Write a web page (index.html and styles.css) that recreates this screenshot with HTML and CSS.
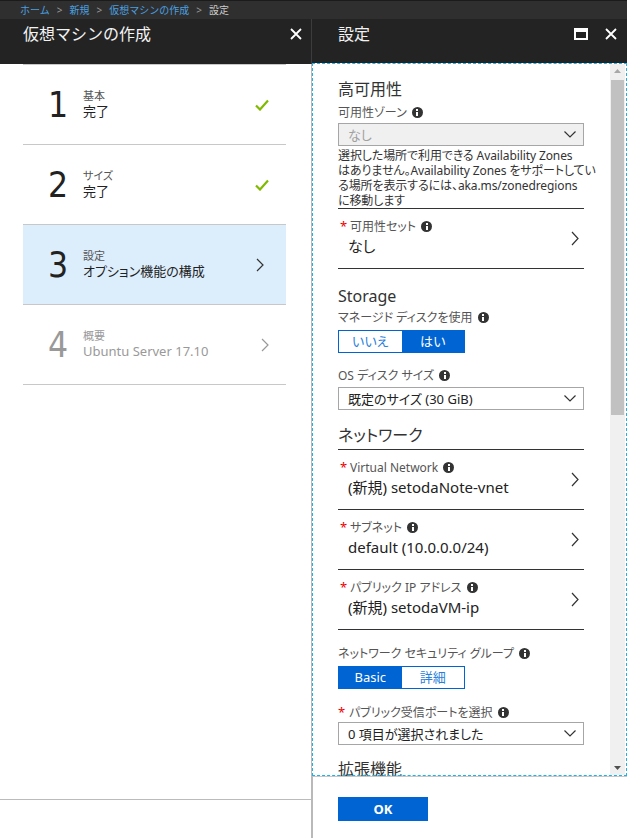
FILE: index.html
```html
<!DOCTYPE html>
<html lang="ja">
<head>
    <meta charset="UTF-8">
    <title>設定</title>
    <link rel="stylesheet" href="styles.css">
</head>
<body>
    <nav class="crumbs"><a>ホーム</a><span class="sep">&gt;</span><a>新規</a><span class="sep">&gt;</span><a>仮想マシンの作成</a><span class="sep">&gt;</span><span class="here">設定</span></nav>
    <div class="blades">
        <section class="blade left">
            <header class="blade-head">
                <h1>仮想マシンの作成</h1>
                <svg class="hicon" width="12" height="12" viewBox="0 0 12 12"><path d="M1 1L11 11M11 1L1 11" stroke="#fff" stroke-width="1.8"/></svg>
            </header>
            <div class="steps-wrap">
                <div class="steps">
                    <div class="step">
                        <span class="num">1</span>
                        <div class="step-text"><div class="step-title">基本</div><div class="step-sub">完了</div></div>
                        <svg class="check" width="14" height="12" viewBox="0 0 14 12"><path d="M1 6.5L5 10.5L13 1.5" fill="none" stroke="#7fba00" stroke-width="2.2"/></svg>
                    </div>
                    <div class="step">
                        <span class="num">2</span>
                        <div class="step-text"><div class="step-title">サイズ</div><div class="step-sub">完了</div></div>
                        <svg class="check" width="14" height="12" viewBox="0 0 14 12"><path d="M1 6.5L5 10.5L13 1.5" fill="none" stroke="#7fba00" stroke-width="2.2"/></svg>
                    </div>
                    <div class="step active">
                        <span class="num">3</span>
                        <div class="step-text"><div class="step-title">設定</div><div class="step-sub">オプション機能の構成</div></div>
                        <svg class="chev" width="8" height="14" viewBox="0 0 8 14"><path d="M1 1L7 7L1 13" fill="none" stroke="#333" stroke-width="1.2"/></svg>
                    </div>
                    <div class="step disabled">
                        <span class="num">4</span>
                        <div class="step-text"><div class="step-title">概要</div><div class="step-sub">Ubuntu Server 17.10</div></div>
                        <svg class="chev" width="8" height="14" viewBox="0 0 8 14"><path d="M1 1L7 7L1 13" fill="none" stroke="#999" stroke-width="1.2"/></svg>
                    </div>
                </div>
            </div>
            <div class="left-foot"></div>
        </section>

        <section class="blade right">
            <header class="blade-head">
                <h1>設定</h1>
                <div class="head-icons">
                    <svg width="14" height="12" viewBox="0 0 14 12"><rect x="1" y="1" width="12" height="10" fill="none" stroke="#fff" stroke-width="2"/><rect x="1" y="1" width="12" height="3" fill="#fff"/></svg>
                    <svg width="12" height="12" viewBox="0 0 12 12"><path d="M1 1L11 11M11 1L1 11" stroke="#fff" stroke-width="1.8"/></svg>
                </div>
            </header>
            <div class="scroll">
                <div class="form">
                    <h2 class="sec first">高可用性</h2>
                    <div class="label top">可用性ゾーン <i class="info"></i></div>
                    <div class="select disabled"><span>なし</span><svg width="12" height="7" viewBox="0 0 12 7"><path d="M0.5 0.5L6 6L11.5 0.5" fill="none" stroke="#333" stroke-width="1.2"/></svg></div>
                    <p class="help">選択した場所で利用できる Availability Zones<br>はありません。Availability Zones をサポートしてい<br>る場所を表示するには、aka.ms/zonedregions<br>に移動します</p>
                    <div class="rows">
                        <div class="row">
                            <div class="row-text">
                                <div class="label"><span class="req">*</span>可用性セット <i class="info"></i></div>
                                <div class="value">なし</div>
                            </div>
                            <svg width="8" height="15" viewBox="0 0 8 15"><path d="M1 1L7 7.5L1 14" fill="none" stroke="#333" stroke-width="1.2"/></svg>
                        </div>
                    </div>

                    <h2 class="sec storage">Storage</h2>
                    <div class="label">マネージド ディスクを使用 <i class="info"></i></div>
                    <div class="toggle"><span>いいえ</span><span class="on">はい</span></div>
                    <div class="label gap">OS ディスク サイズ <i class="info"></i></div>
                    <div class="select"><span>既定のサイズ (30 GiB)</span><svg width="12" height="7" viewBox="0 0 12 7"><path d="M0.5 0.5L6 6L11.5 0.5" fill="none" stroke="#333" stroke-width="1.2"/></svg></div>

                    <h2 class="sec net">ネットワーク</h2>
                    <div class="rows">
                        <div class="row">
                            <div class="row-text">
                                <div class="label"><span class="req">*</span>Virtual Network <i class="info"></i></div>
                                <div class="value">(新規) setodaNote-vnet</div>
                            </div>
                            <svg width="8" height="15" viewBox="0 0 8 15"><path d="M1 1L7 7.5L1 14" fill="none" stroke="#333" stroke-width="1.2"/></svg>
                        </div>
                        <div class="row">
                            <div class="row-text">
                                <div class="label"><span class="req">*</span>サブネット <i class="info"></i></div>
                                <div class="value">default (10.0.0.0/24)</div>
                            </div>
                            <svg width="8" height="15" viewBox="0 0 8 15"><path d="M1 1L7 7.5L1 14" fill="none" stroke="#333" stroke-width="1.2"/></svg>
                        </div>
                        <div class="row">
                            <div class="row-text">
                                <div class="label"><span class="req">*</span>パブリック IP アドレス <i class="info"></i></div>
                                <div class="value">(新規) setodaVM-ip</div>
                            </div>
                            <svg width="8" height="15" viewBox="0 0 8 15"><path d="M1 1L7 7.5L1 14" fill="none" stroke="#333" stroke-width="1.2"/></svg>
                        </div>
                    </div>

                    <div class="label gap nsg">ネットワーク セキュリティ グループ <i class="info"></i></div>
                    <div class="toggle"><span class="on">Basic</span><span>詳細</span></div>
                    <div class="label gap"><span class="req plain">*</span>パブリック受信ポートを選択 <i class="info"></i></div>
                    <div class="select port"><span>0 項目が選択されました</span><svg width="12" height="7" viewBox="0 0 12 7"><path d="M0.5 0.5L6 6L11.5 0.5" fill="none" stroke="#333" stroke-width="1.2"/></svg></div>

                    <h2 class="sec ext">拡張機能</h2>
                </div>
                <div class="scrollbar">
                    <svg width="15" height="14" viewBox="0 0 15 14"><path d="M4 9L7.5 5L11 9Z" fill="#a8a8a8"/></svg>
                    <div class="thumb"></div>
                    <div class="track"></div>
                    <svg width="15" height="14" viewBox="0 0 15 14"><path d="M4 5L7.5 9L11 5Z" fill="#505050"/></svg>
                </div>
            </div>
            <footer class="right-foot">
                <button class="ok">OK</button>
            </footer>
        </section>
    </div>
</body>
</html>
```

FILE: styles.css
```css
html, body {
    margin: 0;
    padding: 0;
}
body {
    width: 627px;
    height: 838px;
    overflow: hidden;
    background-color: #fff;
    font-family: "Noto Sans", "Noto Sans CJK JP", sans-serif;
    font-feature-settings: "palt";
    color: #222;
}
.crumbs {
    height: 19px;
    box-sizing: border-box;
    border-top: 1px solid #1b1b1b;
    background-color: #2f2f2f;
    padding-left: 20px;
    font-size: 10px;
    line-height: 18px;
    color: #ccc;
    white-space: nowrap;
    font-feature-settings: normal;
}
.crumbs a {
    color: #4aa0e0;
}
.crumbs .sep {
    color: #9a9a9a;
    margin: 0 7px;
}
.blades {
    display: flex;
    height: 819px;
}
.blade {
    display: flex;
    flex-direction: column;
}
.blade.left {
    width: 311px;
    border-right: 1px solid #b9b9b9;
}
.blade.right {
    width: 315px;
}
.blade-head {
    height: 45px;
    box-sizing: border-box;
    background-color: #232323;
    display: flex;
    align-items: flex-start;
    justify-content: space-between;
    padding: 4px 9px 0 23px;
}
.blade.left .blade-head {
    margin-right: -1px;
    border-right: 1px solid #3c3c3c;
}
.blade.right .blade-head {
    height: 44px;
    padding: 4px 10px 0 26px;
}
.blade-head h1 {
    margin: 0;
    font-size: 16px;
    font-weight: 400;
    line-height: 22px;
    color: #f2f2f2;
    font-feature-settings: normal;
}
.hicon {
    margin-top: 5px;
}
.head-icons {
    display: flex;
    gap: 17px;
    margin-top: 5px;
}
.steps-wrap {
    flex: 1;
    padding: 0 25px 0 23px;
}
.steps {
    border-top: 1px solid #c8c8c8;
}
.step {
    display: flex;
    align-items: center;
    height: 79px;
    border-bottom: 1px solid #c8c8c8;
    padding: 0 17px 0 25px;
}
.step.active {
    background-color: #dcedfc;
    padding-right: 22px;
}
.num {
    width: 35px;
    font-family: "DejaVu Sans", sans-serif;
    font-size: 36px;
    line-height: 40px;
    color: #222;
    transform: scaleX(0.88);
    transform-origin: left center;
}
.step-text {
    flex: 1;
}
.step-title {
    font-size: 11px;
    line-height: 14px;
    color: #555;
}
.step-sub {
    font-size: 13px;
    line-height: 17px;
    color: #222;
}
.step.disabled .num,
.step.disabled .step-title,
.step.disabled .step-sub {
    color: #999;
}
.left-foot {
    height: 38px;
    border-top: 1px solid #bbb;
}
.scroll {
    flex: 1;
    display: flex;
    overflow: hidden;
    outline: 1px dashed #22b0e6;
    outline-offset: -1px;
    min-height: 0;
}
.form {
    width: 246px;
    padding-left: 26px;
    flex-shrink: 0;
}
.sec {
    margin: 0;
    font-size: 16px;
    font-weight: 400;
    line-height: 20px;
    color: #333;
}
.sec.first {
    margin-top: 16px;
}
.sec.storage {
    margin-top: 17px;
}
.sec.net {
    margin-top: 15px;
    margin-bottom: 4px;
}
.sec.ext {
    margin-top: 14px;
}
.label {
    font-size: 12px;
    line-height: 16px;
    color: #555;
    margin-top: 4px;
    white-space: nowrap;
}
.label.top {
    margin-top: 6px;
}
.label.gap {
    margin-top: 15px;
}
.label.nsg {
    margin-top: 16px;
}
.info {
    display: inline-block;
    width: 11px;
    height: 11px;
    border-radius: 50%;
    background-color: #333;
    vertical-align: -1px;
    margin-left: 2px;
    position: relative;
}
.info::before {
    content: "";
    position: absolute;
    left: 4.5px;
    top: 2px;
    width: 2px;
    height: 2px;
    background-color: #fff;
}
.info::after {
    content: "";
    position: absolute;
    left: 4.5px;
    top: 5px;
    width: 2px;
    height: 4px;
    background-color: #fff;
}
.select {
    height: 23px;
    box-sizing: border-box;
    border: 1px solid #a6a6a6;
    margin-top: 2px;
    display: flex;
    align-items: center;
    justify-content: space-between;
    padding: 0 7px 0 9px;
    font-size: 13px;
    color: #222;
}
.label.gap + .select {
    margin-top: 3px;
}
.label.gap + .select.port {
    margin-top: 1px;
}
.select.disabled {
    background-color: #f0f0f0;
    color: #a0a0a0;
}
.help {
    margin: 2px 0 0;
    font-size: 12px;
    line-height: 15px;
    color: #333;
    white-space: nowrap;
    letter-spacing: -0.1px;
}
.rows {
    border-bottom: 1px solid #333;
}
.row {
    display: flex;
    align-items: center;
    height: 60px;
    box-sizing: border-box;
    border-top: 1px solid #333;
    padding: 0 5px 0 10px;
}
.row-text {
    flex: 1;
    align-self: flex-start;
    padding-top: 9px;
}
.row .label {
    margin-top: 0;
}
.req {
    display: inline-block;
    width: 10px;
    margin-left: -8px;
    color: #e00;
    font-size: 13px;
}
.req.plain {
    margin-left: 0;
    width: 11px;
}
.value {
    margin-top: 2px;
    font-size: 15px;
    line-height: 18px;
    color: #222;
}
.toggle {
    display: flex;
    width: 127px;
    height: 23px;
    box-sizing: border-box;
    border: 1px solid #0065d3;
    margin-top: 4px;
}
.toggle span {
    flex: 1;
    text-align: center;
    font-size: 13px;
    line-height: 21px;
    color: #2b7fdc;
}
.toggle span.on {
    background-color: #0065d3;
    color: #fff;
}
.scrollbar {
    width: 15px;
    margin: 1px 2px 1px auto;
    background-color: #f0f0f0;
    display: flex;
    flex-direction: column;
}
.thumb {
    height: 335px;
    margin: 2px 1px 0;
    background-color: #c1c1c1;
}
.track {
    flex: 1;
}
.right-foot {
    height: 62px;
    box-sizing: border-box;
    border-top: 1px solid #c8c8c8;
    border-left: 1px solid #b9b9b9;
    padding: 20px 0 0 25px;
}
.ok {
    width: 90px;
    height: 24px;
    border: none;
    background-color: #0065d3;
    color: #fff;
    font-family: "Noto Sans", sans-serif;
    font-size: 13px;
    font-weight: 700;
    cursor: pointer;
}
```
